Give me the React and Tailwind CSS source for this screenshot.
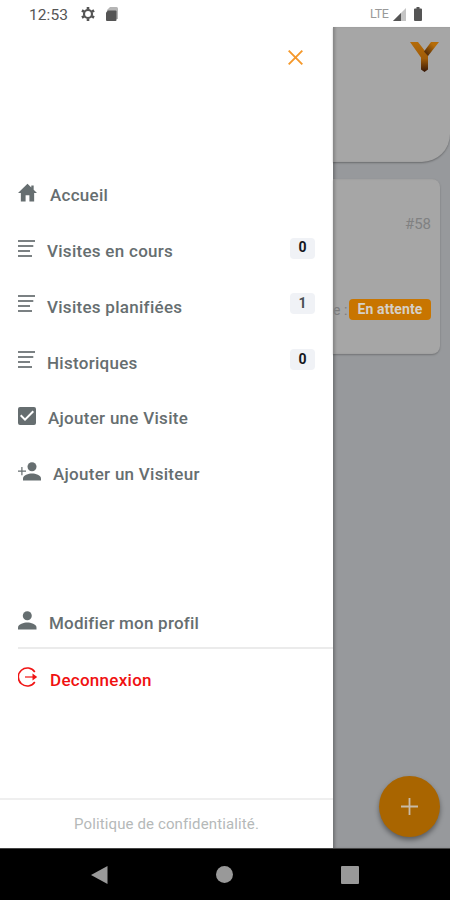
import React from 'react'

const ListIcon = () => (
  <svg className="w-[18px] h-[18px]" viewBox="0 0 18 18" fill="#7b8183">
    <path d="M0 0h17v2H0zM0 5h15.3v2H0zM0 10h12v2H0zM0 15h14v2H0z" />
  </svg>
)

const HomeIcon = () => (
  <svg className="w-[19px] h-[19px]" viewBox="2 2 20 19" fill="#666e70">
    <path d="M5 21h5v-6.500h4V21h5v-9h3L18.500 8.700V4h-2.500v2.300L12 2.300 2 12h3z" />
  </svg>
)

const CheckIcon = () => (
  <svg className="w-[18px] h-[18px]" viewBox="3 3 18 18" fill="#666e70">
    <path d="M19 3H5a2 2 0 0 0-2 2v14a2 2 0 0 0 2 2h14a2 2 0 0 0 2-2V5a2 2 0 0 0-2-2zm-9 14l-5-5 1.410-1.410L10 14.170l7.590-7.590L19 8l-9 9z" />
  </svg>
)

const AddPersonIcon = () => (
  <svg className="w-[24px] h-[19px]" viewBox="0 0 24 19" fill="#666e70">
    <circle cx="14" cy="4.700" r="4.500" />
    <path d="M5 18.500v-2c0-3.200 5.500-5 9-5s9 1.800 9 5v2z" />
    <path d="M3.300 5h1.200v3.500H8v1.200H4.500v3.500H3.300V9.700H0V8.500h3.300z" />
  </svg>
)

const PersonIcon = () => (
  <svg className="w-[19px] h-[19px]" viewBox="0 0 19 19" fill="#666e70">
    <circle cx="9.300" cy="4.700" r="4.500" />
    <path d="M0 18.500v-2c0-3.200 6-5 9.300-5s9.200 1.800 9.200 5v2z" />
  </svg>
)

const LogoutIcon = () => (
  <svg className="w-[20px] h-[22px]" viewBox="0 0 20 22" fill="none" stroke="#f01414" strokeWidth="1.600">
    <path d="M16.800 6A9 9 0 1 0 16.800 16" />
    <path d="M7 11h9" strokeWidth="1.200" />
    <path d="M14.500 7.500L19.200 11l-4.700 3.500z" fill="#f01414" stroke="none" />
  </svg>
)

const items = [
  { label: 'Accueil', icon: <HomeIcon />, space: 'gap-[13px] pl-[18px]' },
  { label: 'Visites en cours', icon: <ListIcon />, space: 'gap-[11px] pl-[18px]', count: 0 },
  { label: 'Visites planifiées', icon: <ListIcon />, space: 'gap-[11px] pl-[18px]', count: 1, soft: true },
  { label: 'Historiques', icon: <ListIcon />, space: 'gap-[11px] pl-[18px]', count: 0 },
  { label: 'Ajouter une Visite', icon: <CheckIcon />, space: 'gap-[12px] pl-[18px]' },
  { label: 'Ajouter un Visiteur', icon: <AddPersonIcon />, space: 'gap-[11px] pl-[18px]' },
]

const StatusBar = () => (
  <div className="h-[27px] shrink-0 flex items-center justify-between pl-[29px] pr-[28px] pt-px text-[#555]">
    <div className="flex items-center">
      <span className="text-[15.500px] tracking-[0.1px] leading-none w-[52px] pt-[3px]">12:53</span>
      <svg className="w-[14px] h-[14px]" viewBox="0 0 14 14" fill="none" stroke="#555">
        <circle cx="7" cy="7" r="4" strokeWidth="2.200" />
        <path d="M7 0v2.500M7 11.500V14M.9 3.500l2.200 1.200M10.900 9.300l2.200 1.200M.9 10.500l2.200-1.200M10.900 4.700l2.200-1.200" strokeWidth="2.600" />
      </svg>
      <svg className="w-[12px] h-[14px] ml-[11px]" viewBox="0 0 12 14">
        <path d="M4 0h6.500A1.500 1.500 0 0 1 12 1.500V12H1V3z" fill="#b5b5b5" />
        <path d="M2 3.500h7.500a1 1 0 0 1 1 1V13a1 1 0 0 1-1 1H1a1 1 0 0 1-1-1V5.500z" fill="#555" />
      </svg>
    </div>
    <div className="flex items-center">
      <span className="text-[12.500px] text-[#999] leading-none tracking-[-0.4px] w-[23px]">LTE</span>
      <svg className="w-[13px] h-[13px]" viewBox="0 0 13 13">
        <path d="M13 0v13H0z" fill="#c4c4c4" />
        <path d="M8 5v8H0z" fill="#555" />
      </svg>
      <svg className="w-[8px] h-[14px] ml-[8px]" viewBox="0 0 8 14" fill="#555">
        <path d="M2.500 0h3v1.500H7a1 1 0 0 1 1 1V13a1 1 0 0 1-1 1H1a1 1 0 0 1-1-1V2.500a1 1 0 0 1 1-1h1.500z" />
      </svg>
    </div>
  </div>
)

const Drawer = () => (
  <div className="w-[333px] shrink-0 bg-white flex flex-col">
    <div className="h-[140.500px] flex justify-end pr-[30px] pt-[23px]">
      <svg className="w-[15px] h-[15px]" viewBox="0 0 15 15" stroke="#f5982a" strokeWidth="1.900">
        <path d="M.7.7l13.600 13.600M14.300.7L.7 14.300" />
      </svg>
    </div>

    {/* Menu */}
    <div className="flex flex-col text-[#666e70] font-medium text-[17px] tracking-[0.280px]">
      {items.map((item) => (
        <div key={item.label} className={`h-[55.800px] flex items-center pr-[18px] ${item.space}`}>
          <span className="pb-[5px]">{item.icon}</span>
          <span className="flex-1 whitespace-nowrap pt-px">{item.label}</span>
          {item.count !== undefined && (
            <span className={`w-[25px] h-[21px] mb-[6px] rounded-[4px] bg-[#f0f2f6] text-[14px] tracking-normal pb-px font-bold flex items-center justify-center ${item.soft ? 'text-[#4b4f54]' : 'text-[#15181c]'}`}>
              {item.count}
            </span>
          )}
        </div>
      ))}
    </div>

    {/* Profile */}
    <div className="mt-[92.500px] ml-[18px] h-[54px] flex items-center gap-[12px] border-b-2 border-[#ebebeb] text-[#666e70] font-medium text-[17px]">
      <span>
        <PersonIcon />
      </span>
      <span className="tracking-[0.220px] pt-[6px]">Modifier mon profil</span>
    </div>
    <div className="ml-[18px] h-[62px] flex items-center gap-[12px] text-[#f01111] font-medium text-[17px]">
      <span className="pb-[5px]"><LogoutIcon /></span>
      <span className="tracking-[0.280px] pt-px">Deconnexion</span>
    </div>

    <div className="mt-auto h-[50px] border-t-2 border-[#efefef] flex items-center justify-center text-[15px] tracking-[0.120px] text-[#b5b9b9]">
      <span className="pt-px">Politique de confidentialité.</span>
    </div>
  </div>
)

const Background = () => (
  <div className="flex-1 bg-[#97999c] flex flex-col shadow-[inset_3px_0_3px_-1px_rgba(0,0,0,0.25)]">
    <div className="h-[135px] rounded-br-[28px] bg-[#a6a6a6] flex justify-end items-start pt-[15px] pr-[11px] shadow-[inset_3px_0_3px_-1px_rgba(0,0,0,0.2),0_1px_2px_rgba(0,0,0,0.3)]">
      <svg className="w-[29px] h-[31px]" viewBox="0 0 29 31">
        <defs>
          <linearGradient id="stem" x1="0" y1="0" x2="0" y2="1">
            <stop offset="0" stopColor="#b46b08" />
            <stop offset="0.550" stopColor="#a05c08" />
            <stop offset="1" stopColor="#351607" />
          </linearGradient>
          <linearGradient id="arm" x1="1" y1="0" x2="0" y2="1">
            <stop offset="0.300" stopColor="#b56c08" />
            <stop offset="1" stopColor="#3c1b06" />
          </linearGradient>
        </defs>
        <path d="M0 0h8l7 9 3 4v14.500L14.500 30 11 27.500V15.500z" fill="url(#stem)" />
        <path d="M21 0h8L18 14l-4-4.500z" fill="url(#arm)" />
      </svg>
    </div>

    {/* Visit card */}
    <div className="mt-[17px] mr-[10px] h-[175px] rounded-r-[8px] bg-[#a6a6a6] flex flex-col items-end pr-[9px] pt-[36px] shadow-[inset_3px_0_3px_-1px_rgba(0,0,0,0.2),0_1px_2px_rgba(0,0,0,0.25)]">
      <span className="text-[15px] leading-[18px] text-[#808182]">#58</span>
      <div className="mt-[66px] w-full flex items-center justify-between text-[#7c7c7d]">
        <span className="text-[14px] leading-[18px] whitespace-nowrap">e :</span>
        <span className="w-[82px] h-[21px] rounded-[4px] bg-[#c87500] text-[#d5d0c8] text-[14px] tracking-[0.100px] font-bold leading-none pb-[2px] flex items-center justify-center">En attente</span>
      </div>
    </div>

    <div className="mt-auto mb-[11px] mr-[10px] self-end w-[61px] h-[61px] rounded-full bg-[#a96500] flex items-center justify-center shadow-[0_3px_5px_rgba(0,0,0,0.4)]">
      <svg className="w-[17px] h-[17px]" viewBox="0 0 17 17" stroke="#c8bba8" strokeWidth="1.800">
        <path d="M8.500 0v17M0 8.500h17" />
      </svg>
    </div>
  </div>
)

const NavBar = () => (
  <div className="h-[52px] shrink-0 bg-black border-t border-[#444] flex items-center justify-between pl-[91px] pr-[91px]">
    <svg className="w-[17px] h-[18px]" viewBox="0 0 17 18" fill="#999">
      <path d="M16.500 0v18L0 9z" />
    </svg>
    <div className="w-[17px] h-[17px] rounded-full bg-[#999]"></div>
    <div className="w-[18px] h-[18px] rounded-[1px] bg-[#999]"></div>
  </div>
)

const App = () => {
  return (
    <div className="w-[450px] h-[900px] bg-white flex flex-col overflow-hidden font-['Roboto',sans-serif]">
      <StatusBar />
      <div className="flex-1 flex">
        <Drawer />
        <Background />
      </div>
      <NavBar />
    </div>
  )
}

export default App
